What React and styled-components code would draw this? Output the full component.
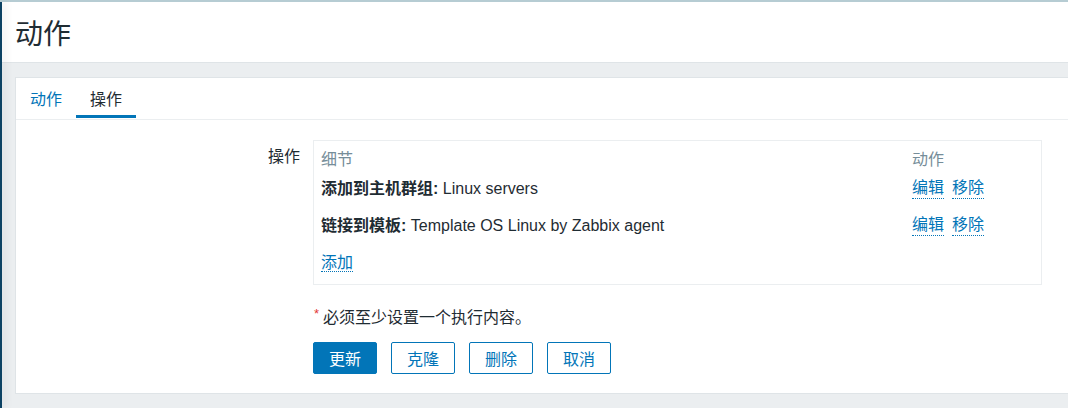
import React from "react";
import styled, { createGlobalStyle } from "styled-components";

const GlobalStyle = createGlobalStyle`
  body {
    margin: 0;
    background: #ebeef0;
    color: #1f2c33;
    font-family: "Liberation Sans", Arial, "Noto Sans CJK SC", sans-serif;
    font-size: 16px;
    overflow: hidden;
  }
`;

const TopStrip = styled.div`
  height: 2px;
  background: #b6ccd3;
`;

const Layout = styled.div`
  display: flex;
  min-height: 406px;
`;

const Sidebar = styled.div`
  width: 2px;
  flex: none;
  background: #0c4263;
  position: relative;
  z-index: 1;
  box-shadow: 2px 0 8px rgba(0, 0, 0, 0.18);
`;

const Main = styled.div`
  flex: 1;
  min-width: 0;
`;

const Header = styled.header`
  height: 60px;
  display: flex;
  align-items: center;
  padding-left: 13px;
  background: #fff;
  border-bottom: 1px solid #dfe4e7;
`;

const Title = styled.h1`
  margin: 0;
  font-size: 28px;
  font-weight: normal;
  color: #1f2c33;
`;

const Content = styled.div`
  padding: 14px 0 14px 13px;
`;

const Panel = styled.div`
  background: #fff;
  border: 1px solid #dfe4e7;
  border-right: 0;
  padding-bottom: 19px;
`;

const Tabs = styled.ul`
  display: flex;
  margin: 0;
  padding: 0 0 1px;
  list-style: none;
  border-bottom: 1px solid #ebeef0;
`;

const Tab = styled.li`
  height: 40px;
  box-sizing: border-box;
  padding: 3px 14px 0;
  display: flex;
  align-items: center;
  color: ${(p) => (p.$active ? "#1f2c33" : "#0275b8")};
  border-bottom: 3px solid ${(p) => (p.$active ? "#0275b8" : "transparent")};
  cursor: pointer;
`;

const Form = styled.div`
  display: grid;
  grid-template-columns: 284px 1fr;
  column-gap: 13px;
  padding-top: 20px;
  padding-right: 26px;
`;

const Label = styled.div`
  text-align: right;
  line-height: 22px;
  padding-top: 6px;
`;

const OpsBox = styled.div`
  border: 1px solid #ebeef0;
  padding: 5px 7px 5px;
  height: 145px;
  box-sizing: border-box;
`;

const Row = styled.div`
  display: grid;
  grid-template-columns: 1fr 122px;
  align-items: center;
  height: ${(p) => (p.$head ? "22px" : "37px")};
  color: ${(p) => (p.$head ? "#768d99" : "#1f2c33")};
`;

const Bold = styled.b`
  font-weight: bold;
`;

const Links = styled.div`
  display: flex;
  gap: 8px;
`;

const Link = styled.span`
  color: #0275b8;
  border-bottom: 1px dotted #0275b8;
  cursor: pointer;
`;

const Note = styled.div`
  grid-column: 2;
  margin-top: 21px;
  line-height: 24px;
`;

const Star = styled.span`
  color: #e33734;
  font-size: 13px;
  vertical-align: top;
  line-height: 16px;
  margin: 0 4px 0 1px;
`;

const Buttons = styled.div`
  grid-column: 2;
  display: flex;
  gap: 14px;
  margin-top: 12px;
`;

const Button = styled.button`
  width: 64px;
  height: 32px;
  padding: 0;
  border-radius: 2px;
  border: 1px solid #0275b8;
  background: ${(p) => (p.$primary ? "#0275b8" : "#fff")};
  color: ${(p) => (p.$primary ? "#fff" : "#0275b8")};
  font-family: inherit;
  font-size: 16px;
  cursor: pointer;
`;

const operations = [
  { label: "添加到主机群组", value: "Linux servers" },
  { label: "链接到模板", value: "Template OS Linux by Zabbix agent" },
];

export default function App() {
  return (
    <>
      <GlobalStyle />
      <TopStrip />
      <Layout>
        <Sidebar />
        <Main>
          <Header>
            <Title>动作</Title>
          </Header>
          <Content>
            <Panel>
              <Tabs>
                <Tab>动作</Tab>
                <Tab $active>操作</Tab>
              </Tabs>
              <Form>
                <Label>操作</Label>
                <OpsBox>
                  <Row $head>
                    <span>细节</span>
                    <span>动作</span>
                  </Row>
                  {operations.map((op) => (
                    <Row key={op.label}>
                      <span>
                        <Bold>{op.label}:</Bold> {op.value}
                      </span>
                      <Links>
                        <Link>编辑</Link>
                        <Link>移除</Link>
                      </Links>
                    </Row>
                  ))}
                  <Row>
                    <span>
                      <Link>添加</Link>
                    </span>
                  </Row>
                </OpsBox>
                <Note>
                  <Star>*</Star>必须至少设置一个执行内容。
                </Note>
                <Buttons>
                  <Button $primary>更新</Button>
                  <Button>克隆</Button>
                  <Button>删除</Button>
                  <Button>取消</Button>
                </Buttons>
              </Form>
            </Panel>
          </Content>
        </Main>
      </Layout>
    </>
  );
}
